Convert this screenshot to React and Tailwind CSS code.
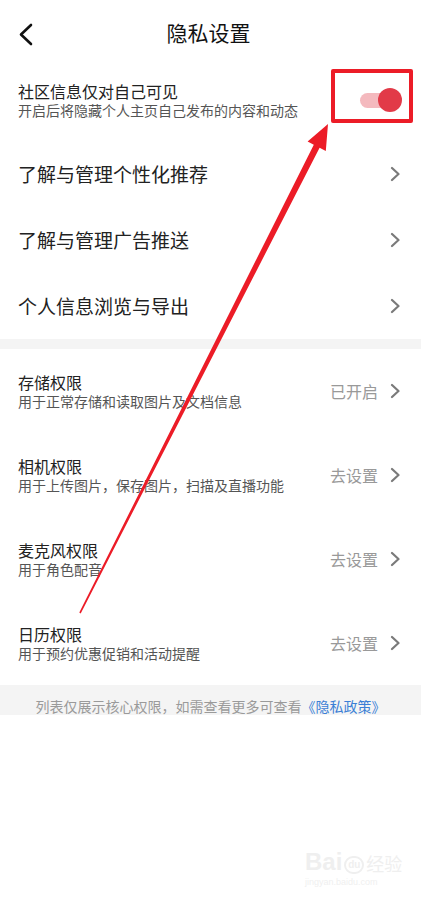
import { useState } from 'react';

const font = { fontFamily: '"Noto Sans CJK SC", "Noto Sans", sans-serif' };

function ChevronRight() {
    return (
        <svg width="10" height="16" viewBox="0 0 10 16" className="shrink-0">
            <polyline points="2,2 8.5,8 2,14" fill="none" stroke="#7a7a7a" strokeWidth="2.2" strokeLinecap="round" strokeLinejoin="round" />
        </svg>
    );
}

function LinkRow({ title }) {
    return (
        <div className="h-[66px] flex items-center justify-between pl-[18px] pr-[21px]">
            <span className="text-[19px] leading-[24px] text-[#222]">{title}</span>
            <ChevronRight />
        </div>
    );
}

function PermRow({ title, desc, status }) {
    return (
        <div className="h-[84px] flex items-center justify-between pl-[18px] pr-[21px]">
            <div className="flex flex-col">
                <span className="text-[16px] leading-[20px] text-[#222]">{title}</span>
                <span className="text-[14px] leading-[18px] text-[#555]">{desc}</span>
            </div>
            <div className="flex items-center gap-[12px]">
                <span className="text-[16px] leading-[20px] text-[#999]">{status}</span>
                <ChevronRight />
            </div>
        </div>
    );
}

export default function App() {
    const [communityOnly, setCommunityOnly] = useState(true);

    const perms = [
        { title: '存储权限', desc: '用于正常存储和读取图片及文档信息', status: '已开启' },
        { title: '相机权限', desc: '用于上传图片，保存图片，扫描及直播功能', status: '去设置' },
        { title: '麦克风权限', desc: '用于角色配音', status: '去设置' },
        { title: '日历权限', desc: '用于预约优惠促销和活动提醒', status: '去设置' },
    ];

    return (
        <div className="relative w-[421px] h-[906px] bg-white overflow-hidden" style={font}>
            {/* header */}
            <div className="relative h-[64px] flex items-center justify-center">
                <button className="absolute left-[14px] top-[18px] p-1">
                    <svg width="16" height="24" viewBox="0 0 16 24">
                        <polyline points="13,3 3,12.5 13,22" fill="none" stroke="#111" strokeWidth="2.6" strokeLinecap="round" strokeLinejoin="round" />
                    </svg>
                </button>
                <h1 className="text-[21px] leading-[28px] text-[#111] mr-[4px]">隐私设置</h1>
            </div>

            {/* community toggle */}
            <div className="pt-[17px] pb-[22px] pl-[18px] pr-[19px] flex items-center justify-between">
                <div className="flex flex-col">
                    <span className="text-[16px] leading-[20px] text-[#222]">社区信息仅对自己可见</span>
                    <span className="text-[14px] leading-[18px] text-[#555]">开启后将隐藏个人主页自己发布的内容和动态</span>
                </div>
                <button
                    onClick={() => setCommunityOnly(!communityOnly)}
                    className="relative w-[44px] h-[24px] flex items-center"
                >
                    <span className={`absolute left-[2px] right-[4px] h-[15px] rounded-full ${communityOnly ? 'bg-[#f4b9be]' : 'bg-[#ddd]'}`} />
                    <span className={`absolute w-[24px] h-[24px] rounded-full ${communityOnly ? 'right-0 bg-[#e23a48]' : 'left-0 bg-white shadow'}`} />
                </button>
            </div>

            <LinkRow title="了解与管理个性化推荐" />
            <LinkRow title="了解与管理广告推送" />
            <LinkRow title="个人信息浏览与导出" />

            <div className="h-[10px] bg-[#f4f4f4]" />

            {perms.map((p) => (
                <PermRow key={p.title} {...p} />
            ))}

            <div className="h-[30px] bg-[#f4f4f4] flex items-end justify-center">
                <span className="text-[14px] leading-[17px] text-[#9a9a9a]">
                    列表仅展示核心权限，如需查看更多可查看<span className="text-[#3b7fd6]">《隐私政策》</span>
                </span>
            </div>

            {/* watermark */}
            <div className="absolute left-[305px] top-[850px] flex flex-col items-start text-[#efefef] select-none" style={{ fontFamily: '"Liberation Sans", sans-serif' }}>
                <div className="flex items-end gap-[2px]">
                    <span className="text-[24px] leading-[24px] font-bold">Bai</span>
                    <span className="w-[20px] h-[18px] rounded-full border-2 border-[#efefef] text-[10px] leading-[14px] text-center font-bold">du</span>
                    <span className="text-[18px] leading-[22px]" style={font}>经验</span>
                </div>
                <span className="text-[9px] leading-[12px] mt-[2px]">jingyan.baidu.com</span>
            </div>

            {/* annotation: red box and arrow */}
            <div className="absolute left-[331px] top-[69px] w-[82px] h-[54px] border-[4px] border-[#ec1c27] rounded-[2px]" />
            <svg className="absolute left-0 top-0 pointer-events-none" width="421" height="906" viewBox="0 0 421 906">
                <polygon
                    points="79.3,612.6 80.7,613.4 319.6,147.8 325.8,151 328,124 307.6,141.6 313.8,144.7"
                    fill="#ec1c27"
                />
            </svg>
        </div>
    );
}
